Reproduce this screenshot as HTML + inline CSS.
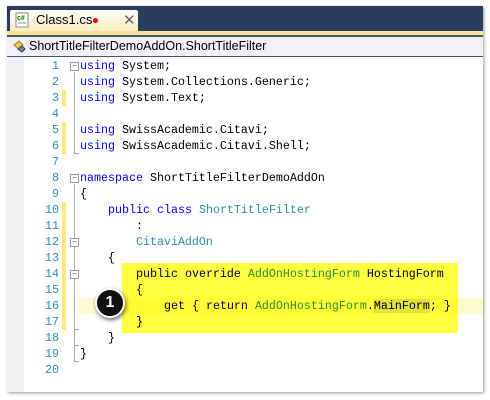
<!DOCTYPE html>
<html><head><style>
body{margin:0;width:490px;height:400px;background:#fff;overflow:hidden;position:relative;font-family:"Liberation Sans",sans-serif}
.frame{position:absolute;left:7px;top:6px;width:476px;height:386px;background:#fff;box-shadow:1px 1px 3px rgba(0,0,0,.4)}
.top{position:absolute;left:0;top:0;width:476px;height:25px;background:#2b3c5c}
.tab{position:absolute;left:3px;top:4px;width:128px;height:21px;background:linear-gradient(#fdfdfd,#fbeec0);border-radius:2px 2px 0 0;font-size:13px}
.yl{position:absolute;left:0;top:25px;width:476px;height:4px;background:#fde396}
.dl{position:absolute;left:0;top:29px;width:476px;height:2px;background:#47566f}
.bc{position:absolute;left:0;top:31px;width:476px;height:19px;background:#f0f0f6;font-size:12.5px;line-height:19px}
.bl{position:absolute;left:0;top:50px;width:476px;height:1px;background:#47566f}
.gut{position:absolute;left:0;top:51px;width:17px;height:335px;background:#f0f0f0}
.code{position:absolute;left:0;top:52px;font-family:"Liberation Mono",monospace;font-size:11.67px;line-height:16px}
.ln{position:absolute;left:30px;width:22px;text-align:right;color:#2b91af}
.tx{position:absolute;left:73px;white-space:pre;color:#000}
.k{color:#0000ff}.t{color:#2b91af}
.ch{position:absolute;left:55px;width:4px;height:16px;background:#fde974}
.fb{position:absolute;left:63px;width:7px;height:7px;border:1px solid #999;background:#fff;font-size:8px;line-height:7px;text-align:center;color:#555}
.vl{position:absolute;left:67px;width:1px;background:#aaa}
</style></head><body>
<div class="frame">
<div class="top"></div>
<div class="tab">
<svg style="position:absolute;left:4px;top:2px" width="16" height="16"><rect x="2" y="1" width="12" height="14" fill="#fff" stroke="#888"/><text x="3" y="8" font-size="7" font-family="Liberation Sans" fill="#080" font-weight="bold">c#</text><line x1="4" y1="11" x2="12" y2="11" stroke="#888"/></svg>
<span style="position:absolute;left:26px;top:2px">Class1.cs</span>
<span style="position:absolute;left:83px;top:8px;width:5px;height:5px;border-radius:50%;background:#e00"></span>
<span style="position:absolute;left:113px;top:1px;color:#666;font-size:15px">✕</span>
</div>
<div class="yl"></div><div class="dl"></div>
<div class="bc"><svg style="position:absolute;left:4px;top:2px" width="16" height="16"><path d="M3 6 L8 2 L12 6 L8 10Z" fill="#e8c84a" stroke="#a07d1a"/><path d="M7 10 L11 7 L14 10 L11 13Z" fill="#6a8fd0" stroke="#335"/></svg><span style="position:absolute;left:22px">ShortTitleFilterDemoAddOn.ShortTitleFilter</span></div>
<div class="bl"></div>
<div class="gut"></div>
<div style="position:absolute;left:72px;top:292px;width:404px;height:16px;background:#fffbd0"></div>
<div class="code">
<div class="ch" style="top:32px"></div>
<div class="ch" style="top:64px;height:32px"></div>
<div class="ch" style="top:144px;height:128px"></div>
<div class="vl" style="top:14px;height:81px"></div><div style="position:absolute;left:67px;top:95px;width:5px;height:1px;background:#aaa"></div>
<div class="vl" style="top:126px;height:177px"></div><div style="position:absolute;left:67px;top:303px;width:5px;height:1px;background:#aaa"></div>
<div style="position:absolute;left:67px;top:287px;width:5px;height:1px;background:#aaa"></div>
<div style="position:absolute;left:67px;top:271px;width:5px;height:1px;background:#aaa"></div>
<div class="fb" style="top:4px">−</div>
<div class="fb" style="top:116px">−</div>
<div class="fb" style="top:180px">−</div>
<div class="fb" style="top:212px">−</div>
<div class="ln" style="top:0">1</div><div class="ln" style="top:16px">2</div><div class="ln" style="top:32px">3</div><div class="ln" style="top:48px">4</div><div class="ln" style="top:64px">5</div><div class="ln" style="top:80px">6</div><div class="ln" style="top:96px">7</div><div class="ln" style="top:112px">8</div><div class="ln" style="top:128px">9</div><div class="ln" style="top:144px">10</div><div class="ln" style="top:160px">11</div><div class="ln" style="top:176px">12</div><div class="ln" style="top:192px">13</div><div class="ln" style="top:208px">14</div><div class="ln" style="top:224px">15</div><div class="ln" style="top:240px">16</div><div class="ln" style="top:256px">17</div><div class="ln" style="top:272px">18</div><div class="ln" style="top:288px">19</div><div class="ln" style="top:304px">20</div>
<div class="tx" style="top:0"><span class="k">using</span> System;
<span class="k">using</span> System.Collections.Generic;
<span class="k">using</span> System.Text;

<span class="k">using</span> SwissAcademic.Citavi;
<span class="k">using</span> SwissAcademic.Citavi.Shell;

<span class="k">namespace</span> ShortTitleFilterDemoAddOn
{
    <span class="k">public</span> <span class="k">class</span> <span class="t">ShortTitleFilter</span>
        :
        <span class="t">CitaviAddOn</span>
    {
        <span class="k">public</span> <span class="k">override</span> <span class="t">AddOnHostingForm</span> HostingForm
        {
            <span class="k">get</span> { <span class="k">return</span> <span class="t">AddOnHostingForm</span>.<span style="background:#e2e2e2">MainForm</span>; }
        }
    }
}</div>
<div style="position:absolute;left:115px;top:205px;width:336px;height:70px;background:#ffff40;mix-blend-mode:multiply"></div>
</div>
<div style="position:absolute;left:88px;top:282px;width:26px;height:26px;border-radius:50%;background:#111;border:2px solid #fff;box-shadow:1px 2px 4px rgba(0,0,0,.6);color:#fff;font-weight:bold;font-size:16px;line-height:26px;text-align:center">1</div>
</div>
</body></html>
